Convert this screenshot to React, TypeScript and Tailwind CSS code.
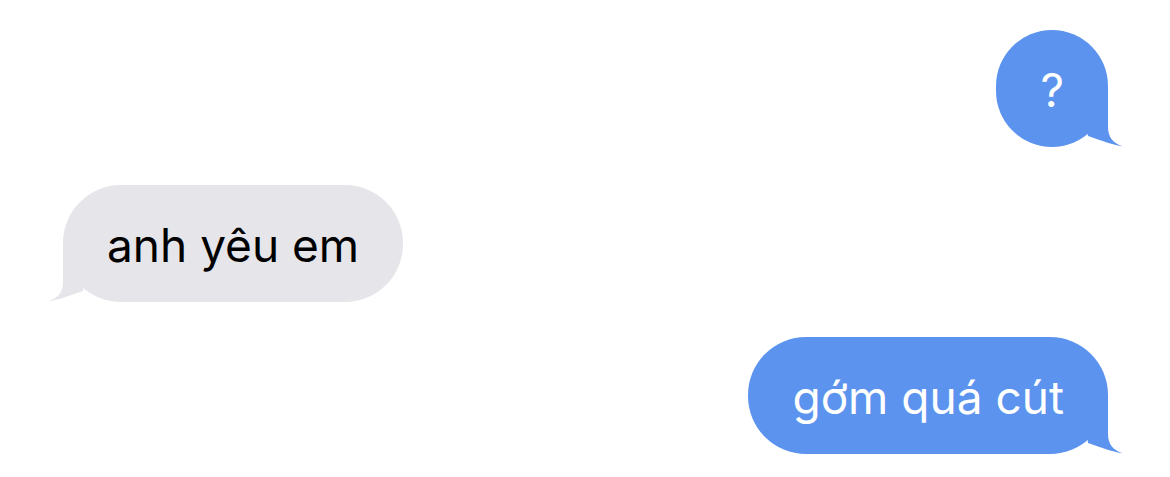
import React from "react";

const TAIL =
  "M 0 0 L 25 0 L 25 40 C 25 50, 30 56, 39.5 59.3 C 30 58, 19 54, 5 49 Z";

function Tail({ side, color }: { side: "left" | "right"; color: string }) {
  return (
    <svg
      width="40"
      height="60"
      viewBox="0 0 40 60"
      className={
        side === "right"
          ? "absolute right-[-15px] bottom-0"
          : "absolute left-[-15px] bottom-0 -scale-x-100"
      }
    >
      <path d={TAIL} fill={color} />
    </svg>
  );
}

function Bubble({
  text,
  side,
  className = "",
}: {
  text: string;
  side: "left" | "right";
  className?: string;
}) {
  const isRight = side === "right";
  const color = isRight ? "#5b93ee" : "#e5e5ea";
  return (
    <div className={`flex ${isRight ? "justify-end" : "justify-start"} ${className}`}>
      <div
        className={`relative flex h-[117px] items-center rounded-[58px] px-[44px] text-[46px] leading-none ${
          isRight ? "bg-[#5b93ee] text-white" : "bg-[#e5e5ea] text-black"
        }`}
      >
        <span className="relative z-10 pt-[2px]">{text}</span>
        <Tail side={side} color={color} />
      </div>
    </div>
  );
}

export default function App() {
  return (
    <div
      className="flex h-[477px] w-[1170px] flex-col bg-white pl-[63px] pr-[62px] pt-[30px]"
      style={{ fontFamily: "Inter, 'Noto Sans', sans-serif" }}
    >
      <Bubble text="?" side="right" />
      <Bubble text="anh yêu em" side="left" className="mt-[38px]" />
      <Bubble text="gớm quá cút" side="right" className="mt-[35px]" />
    </div>
  );
}
